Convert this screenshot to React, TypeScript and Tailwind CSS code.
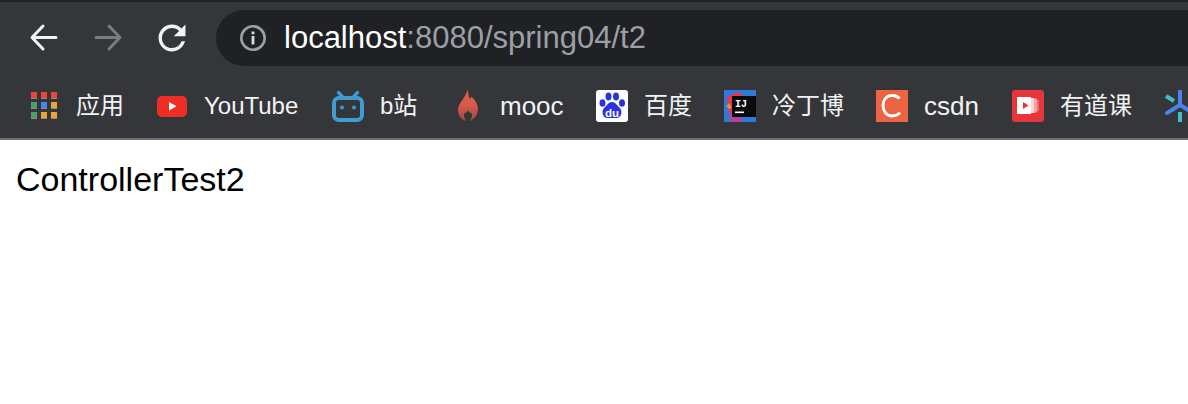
const sans = 'font-["Liberation_Sans","Noto_Sans_CJK_SC",sans-serif]'

function BackIcon() {
  return (
    <svg viewBox="0 0 32 32" className="w-8 h-8" fill="none" stroke="#f1f3f4" strokeWidth="3" strokeLinecap="round" strokeLinejoin="round">
      <path d="M28 15.5H5M15 4L4 15.5 15 27" />
    </svg>
  )
}

function ForwardIcon() {
  return (
    <svg viewBox="0 0 32 32" className="w-8 h-8" fill="none" stroke="#7b7c7f" strokeWidth="3" strokeLinecap="round" strokeLinejoin="round">
      <path d="M4 15.5h23M17 4l11 11.5L17 27" />
    </svg>
  )
}

function ReloadIcon() {
  return (
    <svg viewBox="2.5 2.5 19 19" className="w-8 h-8" fill="#f1f3f4">
      <path d="M17.65 6.35A7.958 7.958 0 0 0 12 4c-4.42 0-7.99 3.58-7.99 8s3.57 8 7.99 8c3.73 0 6.84-2.55 7.73-6h-2.08A5.99 5.99 0 0 1 12 18c-3.31 0-6-2.69-6-6s2.69-6 6-6c1.66 0 3.14.69 4.22 1.78L13 11h7V4l-2.35 2.35z" />
    </svg>
  )
}

function InfoIcon() {
  return (
    <svg viewBox="0 0 32 32" className="w-8 h-8 shrink-0" fill="none">
      <circle cx="16" cy="16" r="11.7" stroke="#9aa0a6" strokeWidth="2.6" />
      <rect x="14.6" y="9.5" width="2.8" height="2.8" fill="#dadce0" />
      <rect x="14.6" y="14" width="2.8" height="8.5" fill="#dadce0" />
    </svg>
  )
}

function AppsIcon() {
  const cells = [
    ['#e8453c', '#e8453c', '#e8453c'],
    ['#4f9f5f', '#4285f4', '#eba43a'],
    ['#4f9f5f', '#eba43a', '#eba43a'],
  ]
  return (
    <svg viewBox="0 0 32 32" className="w-8 h-8">
      {cells.map((row, r) =>
        row.map((c, i) => (
          <g key={`${r}-${i}`}>
            <rect x={3 + i * 10} y={2 + r * 10} width="6" height="6" fill={c} />
            <rect x={3 + i * 10} y={8 + r * 10} width="6" height="1" fill="#8a8b8d" />
          </g>
        ))
      )}
    </svg>
  )
}

function YoutubeIcon() {
  return (
    <svg viewBox="0 0 32 32" className="w-8 h-8">
      <rect x="1" y="6" width="30" height="21" rx="5" fill="#ee2e24" />
      <path d="M13 12l7.5 4.3L13 20.5z" fill="#fff" />
    </svg>
  )
}

function BiliIcon() {
  return (
    <svg viewBox="0 0 32 32" className="w-8 h-8" fill="none" stroke="#3f9bd1">
      <rect x="2" y="8" width="28" height="22" rx="5" strokeWidth="4" />
      <path d="M10.5 7L6.5 2.5M21.5 7l4-4.5" strokeWidth="3.4" strokeLinecap="round" />
      <circle cx="10" cy="17.5" r="2" fill="#3f9bd1" stroke="none" />
      <circle cx="22" cy="17.5" r="2" fill="#3f9bd1" stroke="none" />
    </svg>
  )
}

function FlameIcon() {
  return (
    <svg viewBox="0 0 32 32" className="w-8 h-8">
      <defs>
        <linearGradient id="flame" x1="0" y1="0" x2="0" y2="1">
          <stop offset="0.45" stopColor="#dc5a4a" />
          <stop offset="1" stopColor="#9c4a44" />
        </linearGradient>
      </defs>
      <path
        d="M15.5 0c1.5 3.5.6 6.4 2.600 9 .8-1 1.200-1.600 1.400-2.600 3.600 3.600 6.500 8 6.500 12.600 0 5.600-3.500 10-8.500 12 2.300-2.200 2.900-5 2.200-7.500-1.700-1-3.200-1.500-3.700-3.500-.5 2-2 2.500-3.700 3.500-.7 2.500-.1 5.300 2.200 7.500C9.500 29.800 6 25.600 6 20 6 13 13.500 8 15.500 0z"
        fill="url(#flame)"
      />
    </svg>
  )
}

function BaiduIcon() {
  return (
    <svg viewBox="0 0 32 32" className="w-8 h-8">
      <rect width="32" height="32" rx="3" fill="#fff" />
      <g fill="#2932e1">
        <ellipse cx="6.500" cy="13" rx="3" ry="3.800" />
        <ellipse cx="12.500" cy="6.500" rx="3" ry="3.900" />
        <ellipse cx="20" cy="6.500" rx="3" ry="3.900" />
        <ellipse cx="26" cy="13" rx="3" ry="3.800" />
        <path d="M16 12c3.500 0 5 3.500 7.500 5.500 3 2.500 2.800 10-2.500 10.500H11c-5.300-.5-5.500-8-2.500-10.500C11 15.500 12.500 12 16 12z" />
      </g>
      <text x="16" y="26.500" textAnchor="middle" fill="#fff" fontSize="11.500" fontWeight="700" fontFamily="Liberation Sans, sans-serif">du</text>
    </svg>
  )
}

function IdeaIcon() {
  return (
    <svg viewBox="0 0 32 32" className="w-8 h-8">
      <rect width="32" height="32" fill="#2f7ad8" />
      <path d="M3 7l11-5 7 5-5 21-10 2z" fill="#e8384f" />
      <path d="M5 22l12-3 1 13H7z" fill="#b5419e" />
      <path d="M2.500 16l3-3 2 5-3 1z" fill="#f08a2c" />
      <rect x="8" y="6" width="24" height="21" fill="#0b0b0d" />
      <text x="11" y="16.500" fill="#fff" fontSize="10" fontWeight="700" fontFamily="Liberation Mono, monospace">IJ</text>
      <rect x="11" y="21.500" width="9" height="1.600" fill="#fff" />
    </svg>
  )
}

function CsdnIcon() {
  return (
    <svg viewBox="0 0 32 32" className="w-8 h-8">
      <rect width="32" height="32" fill="#ec6444" />
      <path d="M23.500 8.500A9.500 9.500 0 0 0 16 5.500C10.500 5.500 7 10 7 15.500S10.500 26 16 26c3.200 0 5.800-1 8.200-3.200" fill="none" stroke="#fff" strokeWidth="2.800" />
    </svg>
  )
}

function YoudaoIcon() {
  return (
    <svg viewBox="0 0 32 32" className="w-8 h-8">
      <rect width="32" height="32" rx="3" fill="#e5363c" />
      <rect x="5" y="7" width="14" height="17" fill="#fff" />
      <rect x="19" y="8" width="3" height="15" fill="#fbd5d6" />
      <rect x="22" y="8.500" width="3" height="14" fill="#f4a3a6" />
      <rect x="25" y="10" width="2" height="11" fill="#ec6e72" />
      <path d="M11 12l5.500 3.500L11 19z" fill="#e5363c" />
    </svg>
  )
}

function StarIcon() {
  return (
    <svg viewBox="0 0 32 32" className="w-8 h-8 shrink-0">
      <path d="M16 0v14M3 23l13-8 13 8" fill="none" stroke="#4a82ee" strokeWidth="4" strokeLinecap="round" strokeLinejoin="round" />
      <path d="M2 6l8 5" stroke="#45bcc8" strokeWidth="4" />
      <path d="M16 22v10" stroke="#45bcc8" strokeWidth="4" />
    </svg>
  )
}

const bookmarks = [
  { icon: <AppsIcon />, label: '应用', w: 'w-[48px] text-[24px]' },
  { icon: <YoutubeIcon />, label: 'YouTube', w: 'w-[96px] text-[24px]' },
  { icon: <BiliIcon />, label: 'b站', w: 'w-[40px] text-[24px]' },
  { icon: <FlameIcon />, label: 'mooc', w: 'w-[64px] text-[26px]' },
  { icon: <BaiduIcon />, label: '百度', w: 'w-[48px] text-[24px]' },
  { icon: <IdeaIcon />, label: '冷丁博', w: 'w-[72px] text-[24px]' },
  { icon: <CsdnIcon />, label: 'csdn', w: 'w-[56px] text-[26px]' },
  { icon: <YoudaoIcon />, label: '有道课', w: 'w-[72px] text-[24px]' },
]

export default function App() {
  return (
    <div className={`w-[1188px] h-[404px] overflow-hidden bg-white ${sans}`}>
      <div className="h-[2px] bg-[#202124]" />

      {/* toolbar */}
      <div className="h-[74px] bg-[#35363a] flex items-start pt-[8px] pl-[28px] gap-[28px]">
        <div className="h-[56px] flex items-center gap-[32px]">
          <BackIcon />
          <ForwardIcon />
          <ReloadIcon />
        </div>
        <div className="flex-1 h-[56px] -mr-[40px] rounded-[28px] bg-[#202124] flex items-center pl-[21px] gap-[15px]">
          <InfoIcon />
          <span className="text-[31px] text-[#9aa0a6] whitespace-nowrap">
            <span className="text-white">localhost</span>:8080/spring04/t2
          </span>
        </div>
      </div>

      {/* bookmarks bar */}
      <div className="h-[64px] bg-[#35363a] border-b-2 border-[#6e6f71] flex items-start pt-[14px] pl-[28px] gap-[32px] overflow-hidden">
        {bookmarks.map((b) => (
          <div key={b.label} className="flex items-center gap-[16px] shrink-0">
            {b.icon}
            <span className={`${b.w} leading-[32px] text-[#f1f3f4] whitespace-nowrap`}>{b.label}</span>
          </div>
        ))}
        <StarIcon />
      </div>

      <div className="pl-[16px] pt-[20px] text-[34px] leading-[38px] text-black">ControllerTest2</div>
    </div>
  )
}
